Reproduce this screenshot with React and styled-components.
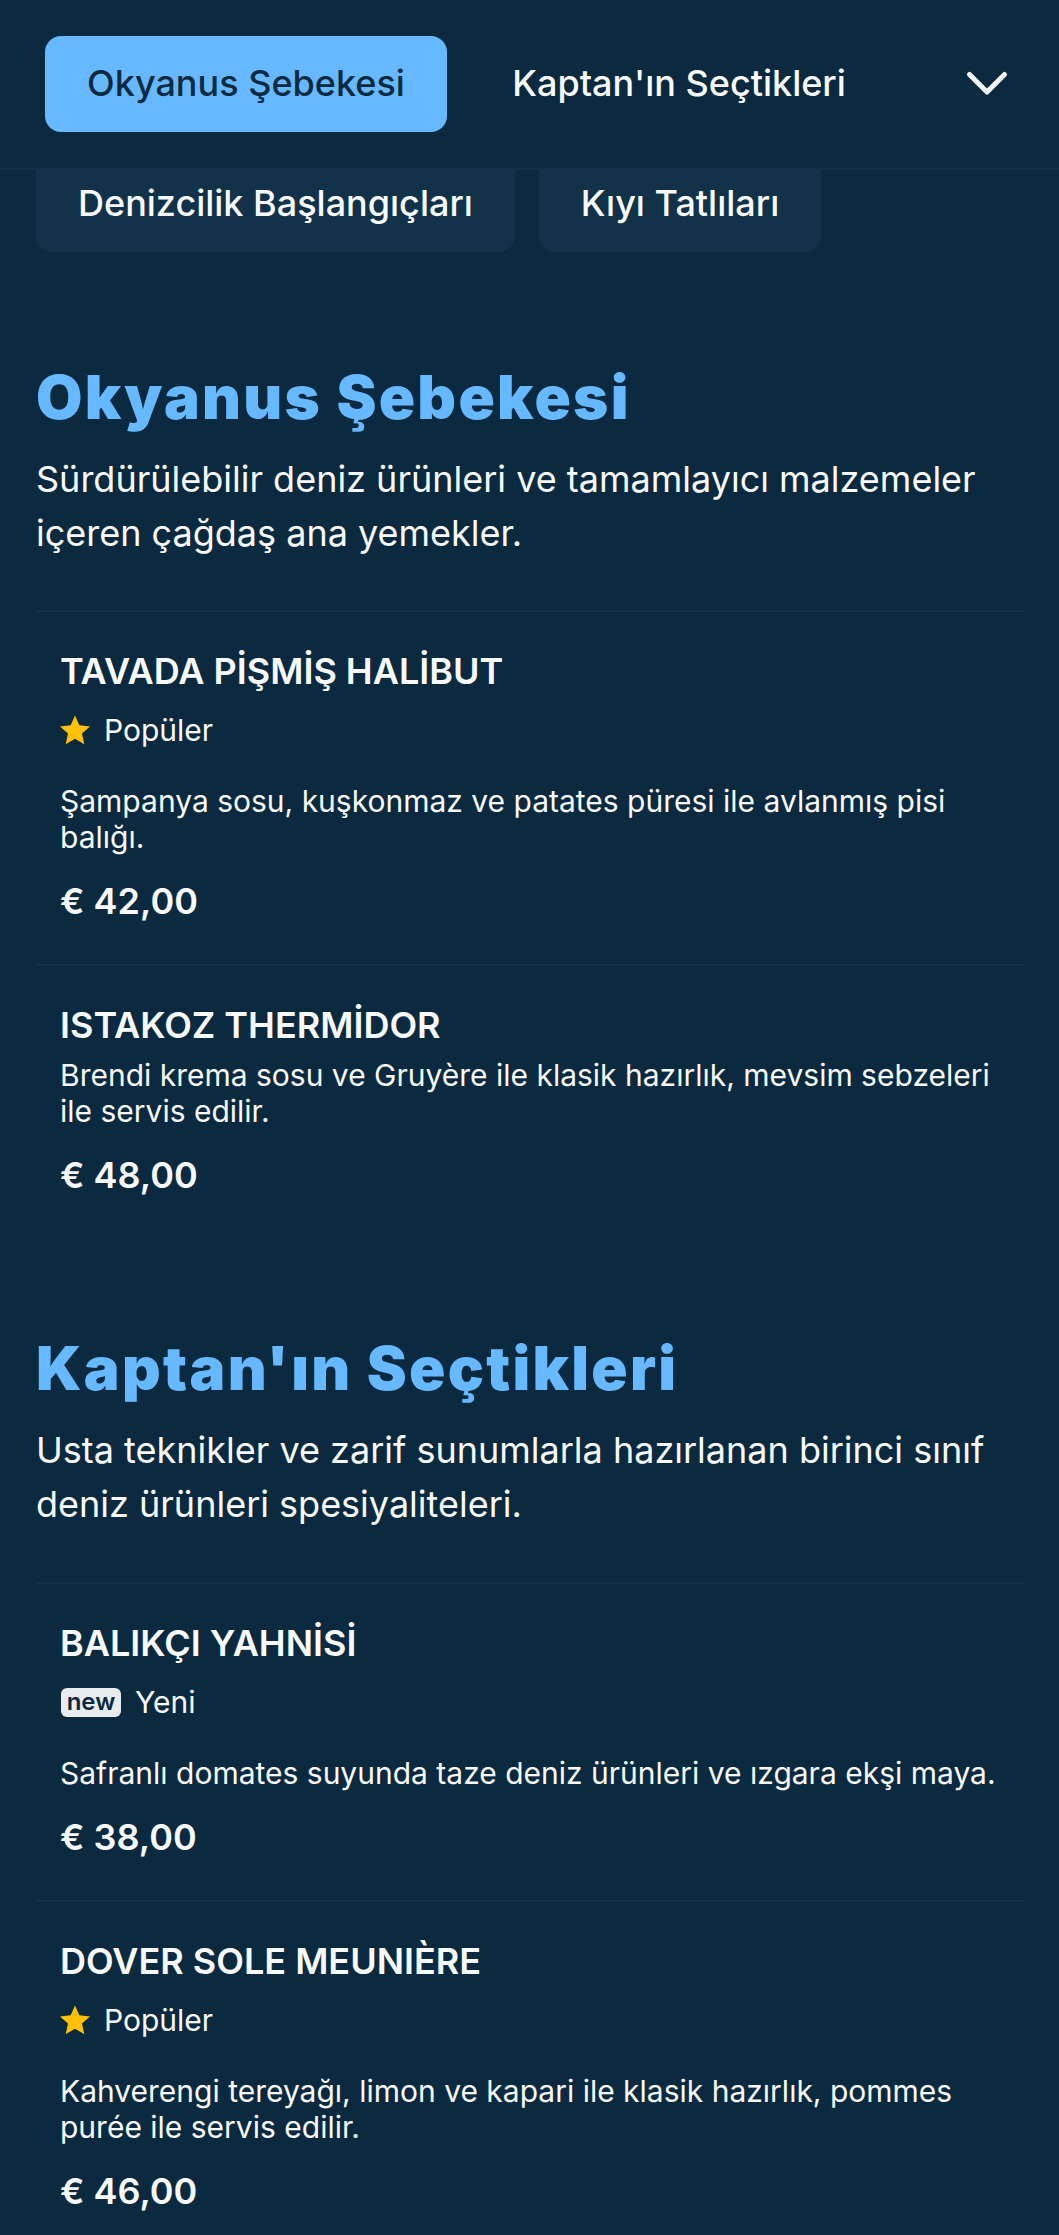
import React from "react";
import styled, { createGlobalStyle } from "styled-components";

const Global = createGlobalStyle`
  html, body { margin: 0; padding: 0; background: #0b2a3f; }
  * { box-sizing: border-box; }
  body { font-family: Inter, "Liberation Sans", sans-serif; color: #f8f9fa; }
`;
const Page = styled.div`
  width: 1059px; height: 2235px; overflow: hidden; background: #0b2a3f;
`;
const Header = styled.header`
  height: 170px; padding: 36px 42px 0 45px; display: flex; align-items: flex-start;
  border-bottom: 2px solid #12324a;
`;
const Tab = styled.div`
  height: 96px; width: ${p => p.$w}px; border-radius: 16px; padding-bottom: 2px; display: flex; align-items: center; justify-content: center;
  font-size: 36px; font-weight: 500; flex: none;
  color: ${p => p.$active ? "#0b2a3f" : "#f8f9fa"};
  background: ${p => p.$active ? "#66b8ff" : "transparent"};
`;
const Chevron = styled.div`
  margin-left: auto; width: 60px; height: 94px; display: flex; align-items: center; justify-content: center; color: #f8f9fa;
`;
const SubTabs = styled.div`
  display: flex; gap: 24px; padding: 0 36px;
`;
const SubTab = styled.div`
  height: 82px; padding: 0 42px 16px; display: flex; align-items: center; border-radius: 0 0 16px 16px;
  background: #12324a; font-size: 36px; font-weight: 500; color: #f8f9fa;
`;
const Section = styled.section`
  padding: ${p => p.$top}px 36px 0;
`;
const Heading = styled.h2`
  margin: 0; font-size: 60px; line-height: 72px; font-weight: 900; letter-spacing: 2.3px; color: #66b8ff;
`;
const Lead = styled.p`
  margin: 19px 0 0; font-size: 36px; line-height: 54px; color: #f8f9fa;
`;
const Item = styled.article`
  border-top: 2px solid #12324a; padding: 37px 24px 0; height: ${p => p.$h}px;
`;
const List = styled.div`
  margin-top: ${p => p.$top}px;
`;
const Title = styled.h3`
  margin: 0; font-size: 36px; line-height: 44px; font-weight: 600; color: #f8f9fa;
`;
const BadgeRow = styled.div`
  display: flex; align-items: center; gap: 14px; height: 44px; margin-top: 15px; font-size: 30px; color: #f8f9fa;
`;
const NewBadge = styled.span`
  background: #e9ecef; color: #0b2a3f; border-radius: 6px; font-size: 24px; font-weight: 600; padding-bottom: 2px; height: 29px; width: 60px;
  margin-left: 1px; display: flex; align-items: center; justify-content: center;
`;
const Desc = styled.p`
  margin: ${p => p.$top}px 0 0; font-size: 30px; line-height: 36px; color: #f8f9fa;
`;
const Price = styled.div`
  margin-top: 24px; font-size: 36px; line-height: 44px; font-weight: 600; color: #f8f9fa;
`;
const Star = () => (
  <svg width="30" height="30" viewBox="0 0 30 30" fill="#ffc107"><path d="M15 .5l4.3 9.8 10.7 1.1-8 7.2 2.3 10.6L15 23.8l-9.3 5.4L8 18.6 0 11.4l10.7-1.1z"/></svg>
);

const Entry = ({ title, badge, desc, price, h }) => (
  <Item $h={h}>
    <Title>{title}</Title>
    {badge === "star" && <BadgeRow><Star />Popüler</BadgeRow>}
    {badge === "new" && <BadgeRow><NewBadge>new</NewBadge>Yeni</BadgeRow>}
    <Desc $top={badge ? 31 : 10}>{desc}</Desc>
    <Price>{price}</Price>
  </Item>
);

export default function App() {
  return (
    <Page>
      <Global />
      <Header>
        <Tab $active $w={402}>Okyanus Şebekesi</Tab>
        <Tab $w={464}>Kaptan'ın Seçtikleri</Tab>
        <Chevron>
          <svg width="48" height="48" viewBox="0 0 48 48" fill="none" stroke="currentColor" strokeWidth="5" strokeLinecap="round" strokeLinejoin="round"><path d="M6.5 15.5L24 33L41.5 15.5"/></svg>
        </Chevron>
      </Header>
      <SubTabs>
        <SubTab>Denizcilik Başlangıçları</SubTab>
        <SubTab>Kıyı Tatlıları</SubTab>
      </SubTabs>
      <Section $top={109}>
        <Heading>Okyanus Şebekesi</Heading>
        <Lead>Sürdürülebilir deniz ürünleri ve tamamlayıcı malzemeler içeren çağdaş ana yemekler.</Lead>
        <List $top={50}>
          <Entry h={354} title="TAVADA PİŞMİŞ HALİBUT" badge="star" desc="Şampanya sosu, kuşkonmaz ve patates püresi ile avlanmış pisi balığı." price="€ 42,00" />
          <Entry h={300} title="ISTAKOZ THERMİDOR" desc="Brendi krema sosu ve Gruyère ile klasik hazırlık, mevsim sebzeleri ile servis edilir." price="€ 48,00" />
        </List>
      </Section>
      <Section $top={68}>
        <Heading>Kaptan'ın Seçtikleri</Heading>
        <Lead>Usta teknikler ve zarif sunumlarla hazırlanan birinci sınıf deniz ürünleri spesiyaliteleri.</Lead>
        <List $top={51}>
          <Entry h={318} title="BALIKÇI YAHNİSİ" badge="new" desc="Safranlı domates suyunda taze deniz ürünleri ve ızgara ekşi maya." price="€ 38,00" />
          <Entry h={340} title="DOVER SOLE MEUNIÈRE" badge="star" desc="Kahverengi tereyağı, limon ve kapari ile klasik hazırlık, pommes purée ile servis edilir." price="€ 46,00" />
        </List>
      </Section>
    </Page>
  );
}
